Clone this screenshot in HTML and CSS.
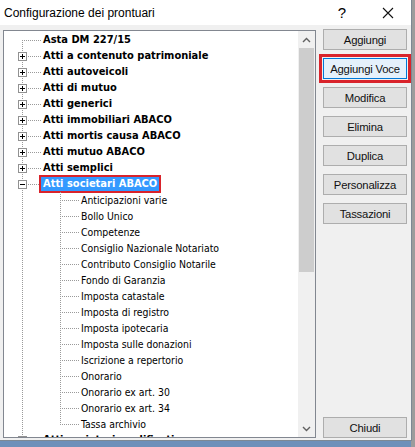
FILE: index.html
```html
<!DOCTYPE html>
<html lang="it">
<head>
<meta charset="utf-8">
<title>Configurazione dei prontuari</title>
<link rel="stylesheet" href="styles.css">
</head>
<body>
<div class="window">
  <div class="titlebar">
    <span class="title">Configurazione dei prontuari</span>
    <span class="help">?</span>
    <span class="close">
      <svg width="12" height="12" viewBox="0 0 12 12"><path d="M1 1 L11 11 M11 1 L1 11" stroke="#111" stroke-width="1.1" fill="none"/></svg>
    </span>
  </div>
  <div class="content">
    <div class="tree">
      <div class="tree-list">
        <div class="row"><span class="g0 first"></span><span class="lbl b">Asta DM 227/15</span></div>
        <div class="row"><span class="g0"><span class="box plus"></span></span><span class="lbl b">Atti a contenuto patrimoniale</span></div>
        <div class="row"><span class="g0"><span class="box plus"></span></span><span class="lbl b">Atti autoveicoli</span></div>
        <div class="row"><span class="g0"><span class="box plus"></span></span><span class="lbl b">Atti di mutuo</span></div>
        <div class="row"><span class="g0"><span class="box plus"></span></span><span class="lbl b">Atti generici</span></div>
        <div class="row"><span class="g0"><span class="box plus"></span></span><span class="lbl b">Atti immobiliari ABACO</span></div>
        <div class="row"><span class="g0"><span class="box plus"></span></span><span class="lbl b">Atti mortis causa ABACO</span></div>
        <div class="row"><span class="g0"><span class="box plus"></span></span><span class="lbl b">Atti mutuo ABACO</span></div>
        <div class="row"><span class="g0"><span class="box plus"></span></span><span class="lbl b">Atti semplici</span></div>
        <div class="row"><span class="g0"><span class="box minus"></span></span><span class="lbl b selected">Atti societari ABACO</span></div>
        <div class="row"><span class="g0 pass"></span><span class="g1"></span><span class="lbl">Anticipazioni varie</span></div>
        <div class="row"><span class="g0 pass"></span><span class="g1"></span><span class="lbl">Bollo Unico</span></div>
        <div class="row"><span class="g0 pass"></span><span class="g1"></span><span class="lbl">Competenze</span></div>
        <div class="row"><span class="g0 pass"></span><span class="g1"></span><span class="lbl">Consiglio Nazionale Notariato</span></div>
        <div class="row"><span class="g0 pass"></span><span class="g1"></span><span class="lbl">Contributo Consiglio Notarile</span></div>
        <div class="row"><span class="g0 pass"></span><span class="g1"></span><span class="lbl">Fondo di Garanzia</span></div>
        <div class="row"><span class="g0 pass"></span><span class="g1"></span><span class="lbl">Imposta catastale</span></div>
        <div class="row"><span class="g0 pass"></span><span class="g1"></span><span class="lbl">Imposta di registro</span></div>
        <div class="row"><span class="g0 pass"></span><span class="g1"></span><span class="lbl">Imposta ipotecaria</span></div>
        <div class="row"><span class="g0 pass"></span><span class="g1"></span><span class="lbl">Imposta sulle donazioni</span></div>
        <div class="row"><span class="g0 pass"></span><span class="g1"></span><span class="lbl">Iscrizione a repertorio</span></div>
        <div class="row"><span class="g0 pass"></span><span class="g1"></span><span class="lbl">Onorario</span></div>
        <div class="row"><span class="g0 pass"></span><span class="g1"></span><span class="lbl">Onorario ex art. 30</span></div>
        <div class="row"><span class="g0 pass"></span><span class="g1"></span><span class="lbl">Onorario ex art. 34</span></div>
        <div class="row"><span class="g0 pass"></span><span class="g1 last"></span><span class="lbl">Tassa archivio</span></div>
        <div class="row"><span class="g0"><span class="box plus"></span></span><span class="lbl b">Atti societari modificati</span></div>
      </div>
      <div class="vscroll">
        <div class="arrow">
          <svg width="9" height="6" viewBox="0 0 9 6"><path d="M1 5 L4.5 1.5 L8 5" stroke="#606060" stroke-width="1.4" fill="none"/></svg>
        </div>
        <div class="track"><div class="thumb"></div></div>
        <div class="arrow">
          <svg width="9" height="6" viewBox="0 0 9 6"><path d="M1 1 L4.5 4.5 L8 1" stroke="#606060" stroke-width="1.4" fill="none"/></svg>
        </div>
      </div>
    </div>
    <div class="buttons">
      <button class="btn">Aggiungi</button>
      <button class="btn focused">Aggiungi Voce</button>
      <button class="btn">Modifica</button>
      <button class="btn">Elimina</button>
      <button class="btn">Duplica</button>
      <button class="btn">Personalizza</button>
      <button class="btn">Tassazioni</button>
      <button class="btn bottom">Chiudi</button>
    </div>
  </div>
</div>
</body>
</html>
```
FILE: styles.css
```css
* { box-sizing: border-box; }
html, body { margin: 0; padding: 0; }
body {
  width: 415px;
  height: 447px;
  overflow: hidden;
  background:
    linear-gradient(to right, transparent 411px, #9c9c9c 411px),
    #6e90ba;
}
.window {
  width: 412px;
  height: 441px;
  background: #f0f0f0;
  border-right: 1px solid #7d8894;
  border-bottom: 1px solid #7d8894;
  display: flex;
  flex-direction: column;
}
.titlebar {
  height: 25px;
  background: #ffffff;
  display: flex;
  align-items: center;
  font-family: "Liberation Sans", Arial, sans-serif;
  font-size: 12px;
  color: #000;
  padding-left: 4px;
}
.title { flex: 1; }
.help {
  font-size: 15px;
  width: 46px;
  text-align: center;
}
.close {
  width: 46px;
  display: flex;
  justify-content: center;
  align-items: center;
}
.content {
  flex: 1;
  display: flex;
  padding: 5px 0 2px 3px;
}
.tree {
  width: 313px;
  height: 408px;
  border: 1px solid #828790;
  background: #ffffff;
  display: flex;
  overflow: hidden;
}
.tree-list {
  flex: 1;
  padding-top: 1px;
  overflow: hidden;
  font-family: "DejaVu Sans Condensed", "DejaVu Sans", sans-serif;
  font-size: 10.4px;
  color: #000;
}
.row {
  height: 16px;
  display: flex;
  align-items: center;
  white-space: nowrap;
}
.g0, .g1 {
  height: 16px;
  flex: none;
  display: flex;
  align-items: center;
  background-repeat: no-repeat;
}
.g0 {
  width: 37px;
  background-image:
    repeating-linear-gradient(to bottom, #9a9a9a 0 1px, transparent 1px 2px),
    repeating-linear-gradient(to right, #9a9a9a 0 1px, transparent 1px 2px);
  background-size: 1px 16px, 19px 1px;
  background-position: 18px 0, 18px 8px;
}
.g0.first {
  background-size: 1px 8px, 19px 1px;
  background-position: 18px 8px, 18px 8px;
}
.g0.pass {
  background-image: repeating-linear-gradient(to bottom, #9a9a9a 0 1px, transparent 1px 2px);
  background-size: 1px 16px;
  background-position: 18px 0;
}
.g1 {
  width: 38px;
  background-image:
    repeating-linear-gradient(to bottom, #9a9a9a 0 1px, transparent 1px 2px),
    repeating-linear-gradient(to right, #9a9a9a 0 1px, transparent 1px 2px);
  background-size: 1px 16px, 19px 1px;
  background-position: 19px 0, 19px 8px;
}
.g1.last {
  background-size: 1px 9px, 19px 1px;
  background-position: 19px 0, 19px 8px;
}
.box {
  width: 9px;
  height: 9px;
  margin-left: 14px;
  border: 1px solid #919191;
  background-color: #fff;
  background-repeat: no-repeat;
}
.box.plus {
  background-image: linear-gradient(#000, #000), linear-gradient(#000, #000);
  background-size: 5px 1px, 1px 5px;
  background-position: 1px 3px, 3px 1px;
}
.box.minus {
  background-image: linear-gradient(#000, #000);
  background-size: 5px 1px;
  background-position: 1px 3px;
}
.lbl {
  height: 14px;
  line-height: 14px;
  padding: 0 2px;
}
.lbl.b {
  font-weight: bold;
  font-size: 11px;
}
.lbl.selected {
  background: #3399ff;
  color: #ffffff;
  outline: 2px solid #d9232b;
  outline-offset: 0;
}
.vscroll {
  width: 17px;
  flex: none;
  background: #f0f0f0;
  display: flex;
  flex-direction: column;
}
.arrow {
  height: 17px;
  display: flex;
  align-items: center;
  justify-content: center;
}
.track {
  flex: 1;
  padding: 0 1px;
}
.thumb {
  height: 224px;
  background: #cdcdcd;
}
.buttons {
  width: 84px;
  margin-left: 7px;
  margin-top: -1px;
  display: flex;
  flex-direction: column;
  gap: 8px;
}
.btn {
  height: 21px;
  width: 84px;
  padding: 0;
  background: #e1e1e1;
  border: 1px solid #adadad;
  font-family: "Liberation Sans", Arial, sans-serif;
  font-size: 11.3px;
  letter-spacing: -0.2px;
  color: #111;
}
.btn.focused {
  background: #e5f1fb;
  border-color: #0078d7;
  outline: 3px solid #d9232b;
  outline-offset: 1px;
}
.btn.bottom {
  margin-top: auto;
}
```
